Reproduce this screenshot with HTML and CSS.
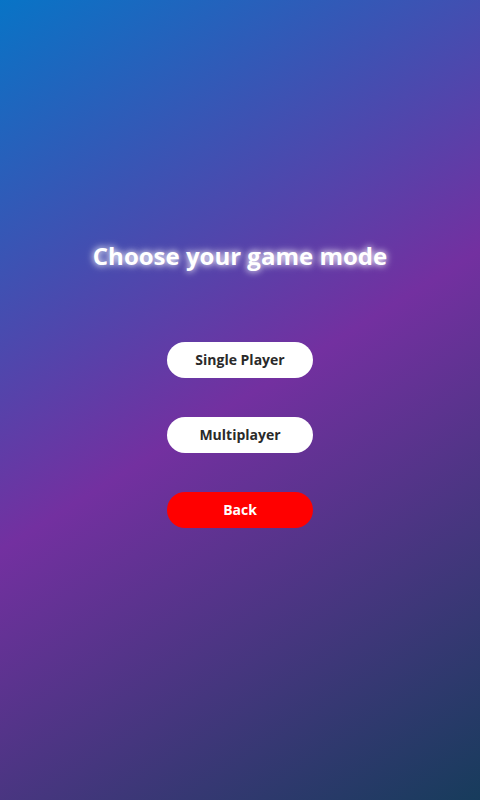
FILE: index.html
```html
<!DOCTYPE html>
<html>
<head>
<meta charset="utf-8">
<link rel="stylesheet" href="styles.css">
</head>
<body>
<main class="screen">
  <h1 class="title">Choose your game mode</h1>
  <div class="menu">
    <button class="btn">Single Player</button>
    <button class="btn">Multiplayer</button>
    <button class="btn btn-back">Back</button>
  </div>
</main>
</body>
</html>
```
FILE: styles.css
```css
html, body {
  margin: 0;
  padding: 0;
  height: 100%;
}
body {
  font-family: "Open Sans", "Noto Sans", sans-serif;
  background: linear-gradient(148deg, #0874c6 0%, #7330a0 50%, #173c5c 100%);
  min-height: 800px;
}
.screen {
  display: flex;
  flex-direction: column;
  align-items: center;
  padding-top: 237px;
}
.title {
  margin: 0;
  color: #fff;
  font-size: 24px;
  font-weight: 700;
  line-height: 38px;
  text-shadow: 0 0 6px rgba(255,255,255,0.9), 0 0 10px rgba(255,255,255,0.5);
}
.menu {
  display: flex;
  flex-direction: column;
  align-items: center;
  gap: 39px;
  margin-top: 67px;
}
.btn {
  width: 146px;
  height: 36px;
  border: none;
  border-radius: 18px;
  background: #fff;
  color: #2a2a2a;
  font-family: "Open Sans", "Noto Sans", sans-serif;
  font-size: 14px;
  font-weight: 700;
  line-height: 35px;
  padding: 0 0 1px;
}
.btn-back {
  background: #ff0000;
  color: #fff;
}
```
